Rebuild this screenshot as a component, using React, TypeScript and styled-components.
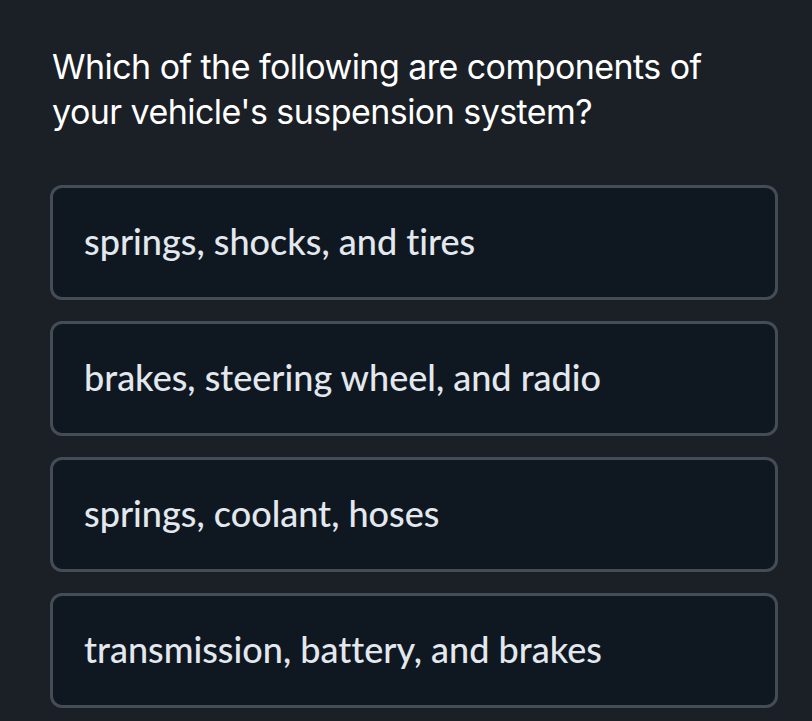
import React from "react";
import styled, { createGlobalStyle } from "styled-components";

const Global = createGlobalStyle`
  html, body { margin: 0; padding: 0; background: #1b1f26; }
  #root { min-height: 721px; }
`;

const Page = styled.div`
  box-sizing: border-box;
  width: 812px;
  height: 721px;
  background: #1b1f26;
  padding: 44px 34px 0 50px;
  display: flex;
  flex-direction: column;
  overflow: hidden;
`;

const Question = styled.h1`
  margin: 0 0 51px 2px;
  font-family: Inter, "Liberation Sans", sans-serif;
  font-weight: 400;
  font-size: 34px;
  line-height: 45px;
  color: #ffffff;
  letter-spacing: -0.55px;
`;

const Options = styled.div`
  display: flex;
  flex-direction: column;
  gap: 21px;
`;

const Option = styled.button`
  box-sizing: border-box;
  width: 728px;
  height: 115px;
  background: #0f1720;
  border: 3px solid #444c56;
  border-radius: 12px;
  padding: 0 0 3px 31px;
  display: flex;
  align-items: center;
  text-align: left;
  font-family: Lato, "Open Sans", sans-serif;
  font-size: 36px;
  font-weight: 500;
  font-variant-ligatures: none;
  color: #e2e8ee;
  cursor: pointer;
`;

const answers = [
  "springs, shocks, and tires",
  "brakes, steering wheel, and radio",
  "springs, coolant, hoses",
  "transmission, battery, and brakes",
];

export default function App() {
  return (
    <Page>
      <Global />
      <Question>
        Which of the following are components of
        <br />
        your vehicle's suspension system?
      </Question>
      <Options>
        {answers.map((a) => (
          <Option key={a}>{a}</Option>
        ))}
      </Options>
    </Page>
  );
}
